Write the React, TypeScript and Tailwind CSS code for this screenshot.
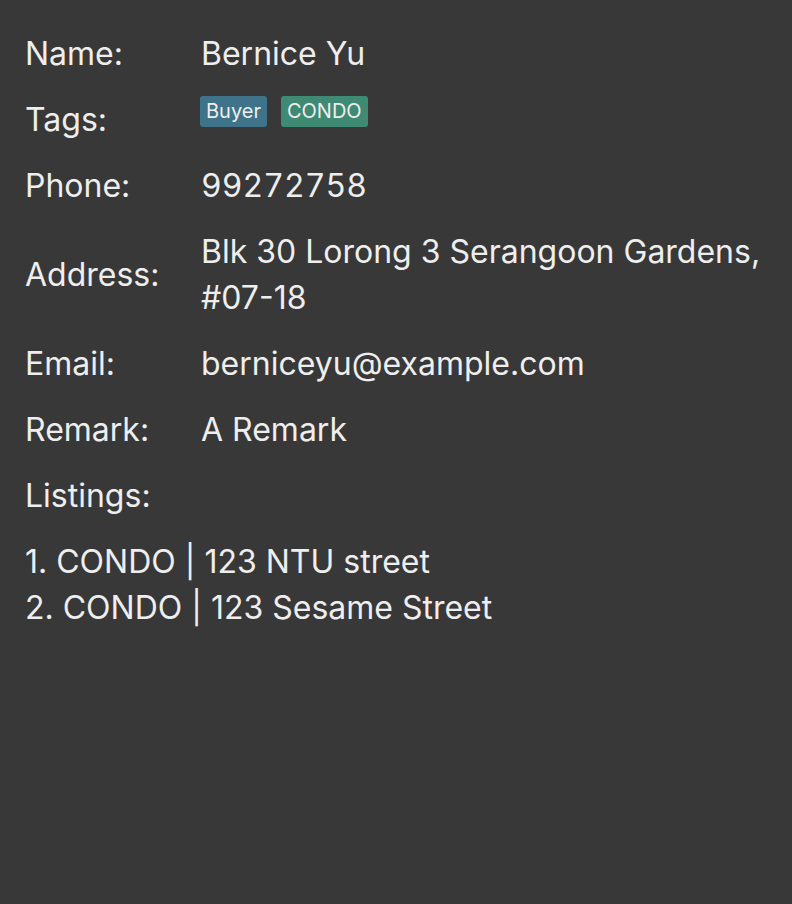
const rows: { label: string; value?: string[]; nums?: boolean }[] = [
  { label: "Name:", value: ["Bernice Yu"] },
  { label: "Tags:" },
  { label: "Phone:", value: ["99272758"], nums: true },
  { label: "Address:", value: ["Blk 30 Lorong 3 Serangoon Gardens,", "#07-18"] },
  { label: "Email:", value: ["berniceyu@example.com"] },
  { label: "Remark:", value: ["A Remark"] },
  { label: "Listings:", value: [] },
];

const listings = ["1. CONDO | 123 NTU street", "2. CONDO | 123 Sesame Street"];

export default function App() {
  return (
    <div
      className="w-[792px] h-[904px] bg-[#383838] text-[#eeeeee] pt-[21px] px-[25px]"
      style={{ fontFamily: "Inter, 'Noto Sans', sans-serif" }}
    >
      {rows.map((row) => (
        <div key={row.label} className="flex items-center min-h-[66px] py-[10px]">
          <div className="w-[176px] shrink-0 text-[32px] leading-[46px]">{row.label}</div>
          {row.label === "Tags:" ? (
            <div className="flex gap-[14px] self-start -mt-[1px] -ml-[1px]">
              <span className="bg-[#3e7389] rounded-[3px] px-[6px] h-[31px] leading-[31px] text-[20px]">
                Buyer
              </span>
              <span className="bg-[#3e8a73] rounded-[3px] px-[6px] h-[31px] leading-[31px] text-[20px]">
                CONDO
              </span>
            </div>
          ) : (
            <div className={row.nums ? "text-[32px] leading-[46px] tabular-nums" : "text-[32px] leading-[46px]"}>
              {row.value?.map((v) => (
                <div key={v}>{v}</div>
              ))}
            </div>
          )}
        </div>
      ))}
      <div className="pt-[10px] text-[32px] leading-[46px]">
        {listings.map((l) => (
          <div key={l}>{l}</div>
        ))}
      </div>
    </div>
  );
}
